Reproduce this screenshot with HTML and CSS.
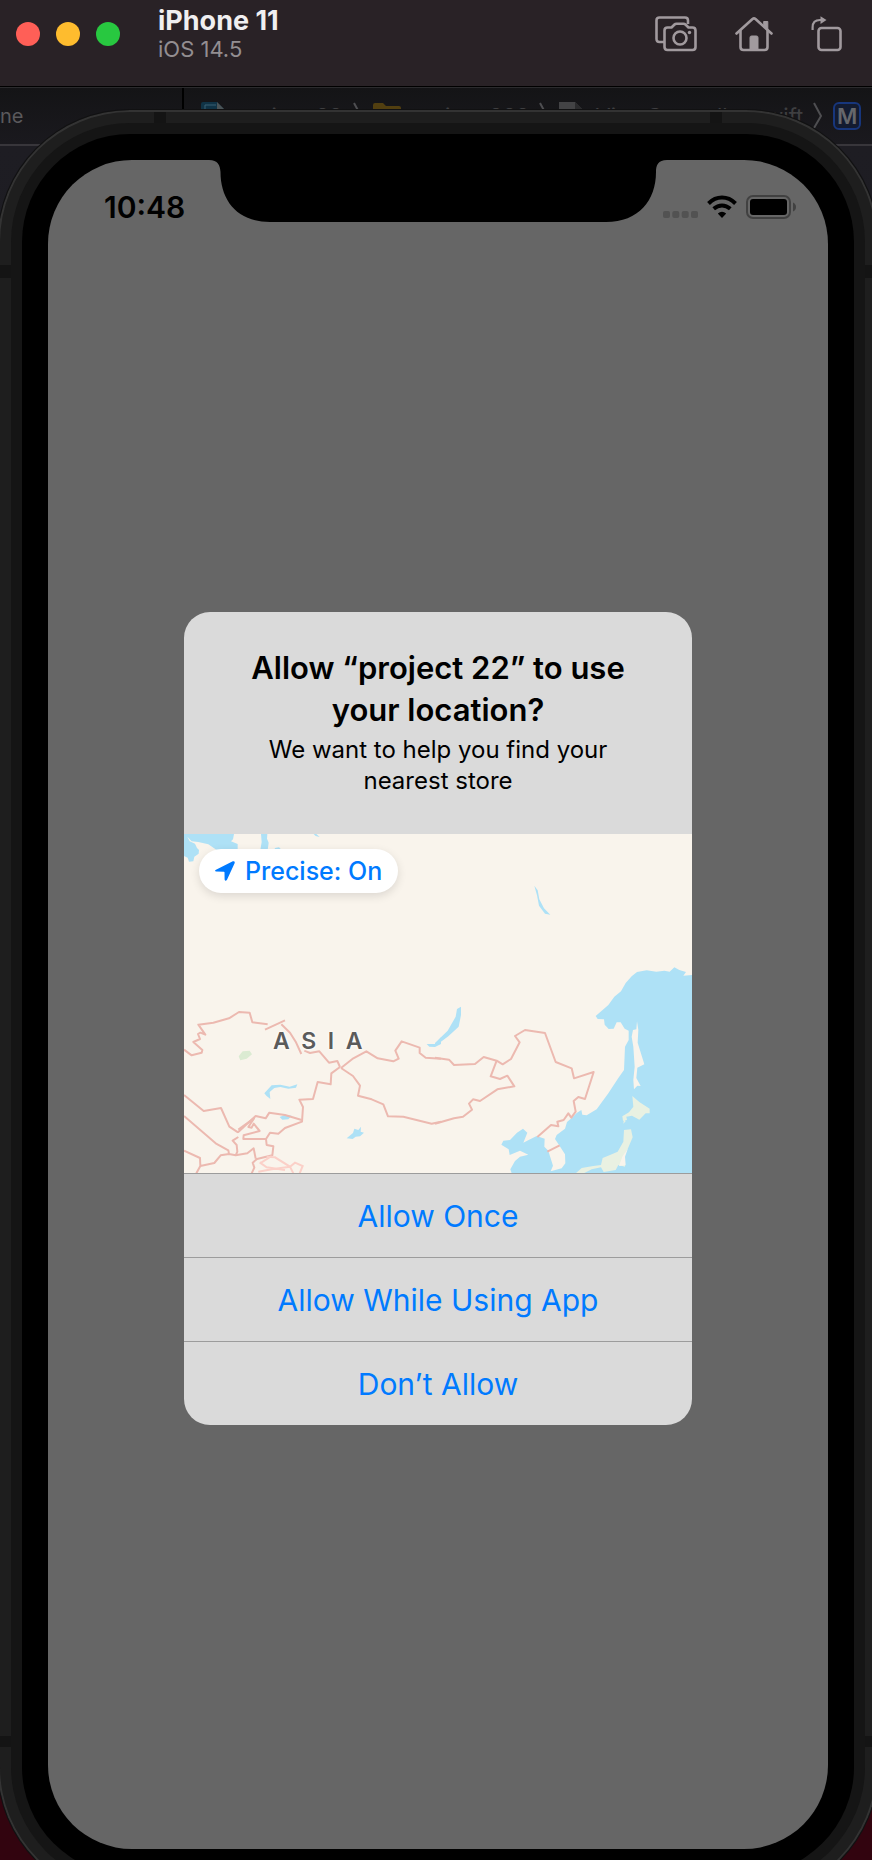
FILE: index.html
```html
<!DOCTYPE html>
<html lang="en">
<head>
<meta charset="utf-8">
<meta name="viewport" content="width=device-width, initial-scale=1">
<title>iPhone 11 – iOS 14.5</title>
<link rel="stylesheet" href="styles.css">
</head>
<body>
<header class="titlebar">
  <div class="lights">
    <button class="light light-close" aria-label="Close"></button>
    <button class="light light-min" aria-label="Minimize"></button>
    <button class="light light-zoom" aria-label="Zoom"></button>
  </div>
  <div class="device">
    <h1 class="device-name">iPhone 11</h1>
    <p class="device-os">iOS 14.5</p>
  </div>
  <div class="tools">
    <button class="tool" aria-label="Screenshot">
      <svg width="42" height="36" viewBox="0 0 42 36" fill="none" stroke="currentColor" stroke-width="2.6" stroke-linejoin="round">
        <path d="M9 26H4.500Q1.500 26 1.500 23V4.500Q1.500 1.500 4.500 1.500H30Q33 1.500 33 4.500V8"/>
        <path d="M12.500 11.500H16.500L19.500 8.500Q20.200 7.800 21.500 7.800H28.500Q29.800 7.800 30.500 8.500L33.500 11.500H37.500Q40.500 11.500 40.500 14.500V31Q40.500 34 37.500 34H12.500Q9.500 34 9.500 31V14.500Q9.500 11.500 12.500 11.500Z"/>
        <circle cx="25" cy="22" r="6.500"/>
        <circle cx="34.500" cy="16.500" r="1.700" fill="currentColor" stroke="none"/>
      </svg>
    </button>
    <button class="tool" aria-label="Home">
      <svg width="38" height="36" viewBox="0 0 38 36" fill="none" stroke="currentColor" stroke-width="2.600" stroke-linecap="round" stroke-linejoin="round">
        <path d="M1.500 17.500L17.500 3Q19 1.800 20.500 3L36.500 17.500"/>
        <path d="M5.500 15V31Q5.500 34 8.500 34H29.500Q32.500 34 32.500 31V15"/>
        <path d="M29 5.500H32.800V14L29 10.500Z" fill="currentColor" stroke-width="1"/>
        <path d="M15 33V21.500Q15 20 16.500 20H21.500Q23 20 23 21.500V33Z" fill="currentColor" stroke-width="1"/>
      </svg>
    </button>
    <button class="tool" aria-label="Rotate">
      <svg width="32" height="36" viewBox="0 0 32 36" fill="none" stroke="currentColor" stroke-width="2.600">
        <rect x="7.500" y="12" width="22" height="22" rx="3"/>
        <path d="M1.600 14V11.500Q1.600 4 9 4H10" stroke-width="2.200"/>
        <path d="M9.500 0.300L15.500 4L9.500 8Z" fill="currentColor" stroke="none"/>
      </svg>
    </button>
  </div>
</header>

<main class="stage">
  <div class="editor" aria-hidden="true">
    <div class="editor-side">ne</div>
    <div class="crumbs">
      <svg width="26" height="28" viewBox="0 0 26 28"><path d="M0 2Q0 0 2 0H16L26 10V28H0Z" fill="#103346"/><path d="M16 0L26 10H16Z" fill="#4b5356"/><path d="M4 28V3H15" fill="none" stroke="#3b6073"/></svg>
      <span>project 22</span>
      <svg class="chev" width="10" height="28" viewBox="0 0 10 28"><path d="M1 1L8 14L1 26"/></svg>
      <svg width="28" height="28" viewBox="0 0 28 28"><path d="M0 3Q0 1 2 1H10L13 4H26Q28 4 28 6V24H0Z" fill="#523f10"/></svg>
      <span>project 222</span>
      <svg class="chev" width="10" height="28" viewBox="0 0 10 28"><path d="M1 1L8 14L1 26"/></svg>
      <svg width="26" height="28" viewBox="0 0 26 28"><path d="M0 0H16L26 10V28H0Z" fill="#434345"/><path d="M16 0L26 10H16Z" fill="#2b2b2d"/></svg>
      <span>ViewController.swift</span>
      <svg class="chev" width="10" height="28" viewBox="0 0 10 28"><path d="M1 1L8 14L1 26"/></svg>
      <b class="method">M</b>
    </div>
  </div>

  <div class="phone">
    <div class="rim">
      <div class="bezel">
        <div class="screen">
          <div class="status">
            <time class="clock">10:48</time>
            <svg class="notch" width="458" height="62" viewBox="0 0 458 62"><path d="M0 0H458C449 0 447 5 447 12C447 40 430 62 397 62H61C28 62 11.500 40 11.500 12C11 5 9 0 0 0Z"/></svg>
            <div class="signals">
              <svg width="35" height="24" viewBox="0 0 35 24" fill="#525252"><rect y="16" width="7" height="7" rx="2"/><rect x="9.300" y="16" width="7" height="7" rx="2"/><rect x="18.700" y="16" width="7" height="7" rx="2"/><rect x="28" y="16" width="7" height="7" rx="2"/></svg>
              <svg width="30" height="24" viewBox="0 0 30 24" fill="none" stroke="#000" stroke-width="4"><path d="M1.500 8.500Q7.500 2.600 15 2.600T28.500 8.500"/><path d="M6.700 13.800Q10.500 10.500 15 10.500T23.300 13.800"/><path d="M15 23L10.800 18.600Q15 15 19.200 18.600Z" fill="#000" stroke="none"/></svg>
              <svg width="50" height="24" viewBox="0 0 50 24"><rect x="1" y="1" width="43" height="22" rx="6" fill="none" stroke="#414141" stroke-width="2"/><rect x="4" y="4" width="37" height="16" rx="3"/><path d="M47 7.500Q50 9 50 12T47 16.500Z" fill="#414141"/></svg>
            </div>
          </div>

          <div class="overlay">
            <section class="alert" role="alertdialog" aria-labelledby="alert-title" aria-describedby="alert-text">
              <div class="alert-head">
                <h2 class="alert-title" id="alert-title">Allow “project 22” to use your location?</h2>
                <p class="alert-text" id="alert-text">We want to help you find your nearest store</p>
              </div>
              <div class="map">
                <svg class="map-art" viewBox="0 0 1524 1017" role="img" aria-label="Map of Asia">
                  <rect width="1524" height="1017" fill="#f9f4ec"/>
                  <g transform="translate(-27 -42)">
                    <g fill="#aee1f6">
                      <path d="M27 42H177L174 58L168 64L188 72V90H125L100 73L70 66L50 64L37 50L44 64L60 71L66 84L72 90L71 101L58 110L55 124L42 125L38 113L27 108Z"/>
                      <path d="M258 42H277L276 56L281 68L278 90H256L260 66ZM300 84L312 82L320 90H298ZM416 42H424L434 51L422 48Z"/>
                      <path d="M268 820L290 796L316 794L344 800L367 793L363 803L340 806L316 801L298 804L284 816L286 837L274 827ZM314 891L330 884L350 887L340 898L322 899ZM515 955L534 939L538 926L550 930L558 920L557 935L567 938L555 949L542 950L533 957ZM755 672L780 672L798 652V672L780 681L763 680Z"/>
                    </g>
                    <path d="M191 709L203 694L224 692L231 703L215 716L196 721Z" fill="#dbebd2"/>
                    <g class="borders">
                      <path d="M27 689L50 706L80 698L82 690L55 666L75 657L69 642L76 638L91 644L70 614L115 608L162 595L192 576L224 578L232 607L278 613M270 629L330 601M319 613L345 638L362 665L379 702M388 692L405 699L433 694L462 728L487 723L495 741M495 741L469 760L467 793L428 786L414 837L373 839L384 861L381 905L330 924L310 941L285 938L273 957H205L206 946L254 933L236 911L230 923L220 921L237 895L190 929M498 744L535 715L574 694L608 715L655 724L671 716L661 692L680 664L734 683V699L752 713L798 716M498 744L534 768L555 797L549 827L590 838L625 853L639 889L685 890L770 911L798 905"/>
                      <path d="M27 825L86 873L138 864L163 920L189 937M27 888L122 970L160 991L162 1002L182 1006L217 1000L236 985L242 1016M189 937L242 888L272 895L283 878L330 885L380 900M190 951L173 962L185 975L187 995L182 1006M27 992L75 1014L76 1038L64 1060M76 1038L118 1029L137 1006L162 1002M273 957L275 975L295 979L292 1006L246 1017L233 1028L238 1043L230 1060"/>
                    </g>
                    <path d="M254 1027L275 1042L330 1050M275 1010L300 1012L345 1040L360 1028L383 1038L374 1060M345 1040L355 1060M250 1055L290 1048L345 1040M255 1030L290 1008" fill="none" stroke="#fbd0c8" stroke-width="6"/>
                  </g>
                  <g transform="translate(753 -42)">
                    <path d="M773 465L745 467L753 456L733 450L718 442L704 455L688 452L664 455L635 451L606 456L590 469L572 489L558 514L538 530L520 555L482 588L488 597L507 598L509 614L521 627L536 626L545 607L557 607L569 626L581 632V660L570 680L567 750L550 774L520 820L485 868L455 886L442 884L439 870L425 879L411 893L396 906L390 926L365 945L360 957L374 978L390 1003L391 1030L380 1045L347 1054L354 1037L345 1009L340 992L328 980L329 956L305 948L281 960L265 968L277 938L264 926L246 938L225 960L205 962L199 974L221 988L224 1005L255 992L280 1004L255 1010L240 1023L226 1048L230 1060H773Z" fill="#aee1f6"/>
                    <g fill="#aee1f6"><path d="M298 197L308 211L313 238L327 265L346 284L330 281L312 257L306 226ZM0 669L38 632L62 590L66 567L78 560V585L71 620L40 649L0 679Z"/></g>
                    <g fill="#f9f4ec"><path d="M606 604L610 630L608 668L628 733L607 743L604 774L617 798L607 797L597 808L595 780L599 740L595 680L590 650L594 630L604 628Z"/></g>
                    <path d="M592 828L613 846L644 866V880L632 880L613 899L591 887L574 890L576 900L564 902L562 889L582 877L595 860ZM567 897L572 904L565 911ZM567 930L588 928L593 952L579 985L570 1000V1040L550 1035L542 1050L506 1056L498 1042L470 1048L446 1060H422L440 1044L475 1038L498 1035L503 1014L525 1005L548 995L565 965Z" fill="#e9f1e2"/>
                    <path d="M552 1038L562 1010L579 985L570 1010L572 1036Z" fill="#f9f4ec"/>
                    <g class="borders">
                      <path d="M0 713L42 719L57 735L120 732L146 711L185 722L203 733L228 717L254 667L240 648L270 630L330 639L362 726L410 745L417 775L476 756L450 837L430 831L416 843L422 875L409 893L400 880L386 900L367 905L370 919L348 915L307 951M185 722L167 769L195 777L217 767L238 799L187 808L135 843L114 838L102 851L111 869L84 890L57 895L0 911M337 995L374 976"/>
                    </g>
                  </g>
                </svg>
                <span class="map-label">A&nbsp;&nbsp;S&nbsp;&nbsp;I&nbsp;&nbsp;A</span>
                <button class="precise">
                  <svg width="20" height="20" viewBox="0 0 20 20" fill="currentColor"><path d="M1 8.800L17.800 .3Q20 -.3 19.700 2L12 18.800Q10.300 21 9.600 18.500L9.500 11.300Q9.500 10.700 8.900 10.700L1.200 10.600Q-1 10 1 8.800Z"/></svg>
                  <span>Precise: On</span>
                </button>
              </div>
              <button class="choice">Allow Once</button>
              <button class="choice">Allow While Using App</button>
              <button class="choice">Don’t Allow</button>
            </section>
          </div>
        </div>
      </div>
    </div>
  </div>
</main>
</body>
</html>
```

FILE: styles.css
```css
* { box-sizing: border-box; }

body {
  margin: 0;
  height: 100vh;
  display: flex;
  flex-direction: column;
  overflow: hidden;
  background: #32040f;
  font-family: Inter, "Liberation Sans", sans-serif;
}

h1, h2, p { margin: 0; }

button {
  border: 0;
  padding: 0;
  background: none;
  color: inherit;
  font: inherit;
}

svg { display: block; }

/* Window title bar */
.titlebar {
  flex: none;
  display: flex;
  align-items: center;
  padding: 7px 29px 23px 16px;
  background: #292226;
  border-bottom: 1px solid #000;
}

.lights { display: flex; gap: 16px; padding-bottom: 2px; }
.light { width: 24px; height: 24px; border-radius: 50%; }
.light-close { background: #ff5f57; }
.light-min { background: #febc2e; }
.light-zoom { background: #28c840; }

.device { margin-left: 38px; line-height: 28px; }
.device-name { font-size: 27px; line-height: 28px; font-weight: 700; color: #f0eff0; }
.device-os { font-size: 22px; color: #938e91; }

.tools { display: flex; gap: 38px; margin-left: auto; padding-bottom: 2px; color: #a19a9e; }

/* Editor window behind the phone */
.stage { flex: 1; min-height: 0; position: relative; padding-top: 23px; }

.editor {
  position: absolute;
  inset: 0 0 auto 0;
  display: grid;
  grid-template-columns: 184px 1fr;
  height: 400px;
  border-top: 1px solid #2b2b2d;
  background: linear-gradient(#141416, #1a191e 56px, #38363b 56px, #38363b 58px, #1e1d23 58px, #1b1b22);
  color: #3f3f41;
  font-size: 22px;
  line-height: 28px;
  white-space: nowrap;
}

.editor-side {
  height: 56px;
  padding-top: 14px;
  border-right: 2px solid #000;
  font-size: 20px;
  color: #5a595c;
}

.crumbs { display: flex; align-items: center; gap: 10px; height: 28px; margin-top: 14px; padding-left: 17px; }
.chev path { fill: none; stroke: #4e4e51; stroke-width: 2; }
.method {
  width: 28px;
  height: 28px;
  border: 2px solid #17367c;
  border-radius: 6px;
  background: #131b30;
  color: #66676b;
  font-weight: 600;
  line-height: 24px;
  text-align: center;
}

/* Phone body: aluminium frame, rim, bezel, screen */
.phone {
  position: relative;
  margin: 0 -6px 0 -2px;
  padding: 13px;
  border-radius: 132px;
  background:
    linear-gradient(#141414, #141414) 156px 0 / 12px 13px no-repeat,
    linear-gradient(#141414, #141414) right 156px top 0 / 12px 13px no-repeat,
    linear-gradient(#141414, #141414) 0 155px / 100% 13px no-repeat,
    linear-gradient(#141414, #141414) 0 calc(100% - 152px) / 100% 11px no-repeat,
    #1e1e1e;
  box-shadow: inset 0 0 0 2px #333, 0 0 0 1px #111112;
}

.rim { padding: 11px; border-radius: 119px; background: #151515; }
.bezel { padding: 26px; border-radius: 108px; background: #000; }

.screen {
  display: flex;
  flex-direction: column;
  aspect-ratio: 780 / 1689;
  padding-bottom: 68px;
  border-radius: 84px;
  background: #666;
  overflow: hidden;
}

.status {
  display: grid;
  grid-template-columns: minmax(0, 1fr) auto minmax(0, 1fr);
  align-items: start;
  height: 96px;
}
.clock { padding: 30px 0 0 56px; font-size: 30px; line-height: 34px; font-weight: 600; }
.signals { display: flex; gap: 9px; justify-content: flex-end; padding: 35px 32px 0 0; }
.signals svg { flex: none; }

/* Permission alert */
.overlay { flex: 1; display: flex; align-items: center; justify-content: center; }

.alert {
  width: 508px;
  max-width: 90%;
  border-radius: 26px;
  background: #dadada;
  overflow: hidden;
  text-align: center;
}

.alert-head { padding: 35px 60px 38px; }
.alert-title { font-size: 31px; line-height: 42px; font-weight: 600; }
.alert-text { margin-top: 3px; font-size: 24px; line-height: 31px; }

.map { position: relative; }
.map-art { width: 100%; height: auto; }
.borders { fill: none; stroke: #ecb9b0; stroke-width: 6; stroke-linejoin: round; }

.map-label {
  position: absolute;
  left: 89px;
  top: 193px;
  font-size: 23px;
  line-height: 28px;
  font-weight: 600;
  color: #5b5b5b;
  text-shadow: 0 0 3px #fff, 0 0 3px #fff;
}

.precise {
  position: absolute;
  left: 15px;
  top: 15px;
  display: flex;
  align-items: center;
  gap: 10px;
  padding: 6px 16px;
  border-radius: 22px;
  background: #fff;
  box-shadow: 0 3px 10px rgba(0, 0, 0, .12);
  color: #007aff;
  font-size: 25px;
  line-height: 32px;
  font-weight: 500;
}

.choice {
  display: block;
  width: 100%;
  padding: 21px 0 20px;
  border-top: 1px solid #9c9c9c;
  color: #007aff;
  font-size: 30px;
  line-height: 42px;
}
```
